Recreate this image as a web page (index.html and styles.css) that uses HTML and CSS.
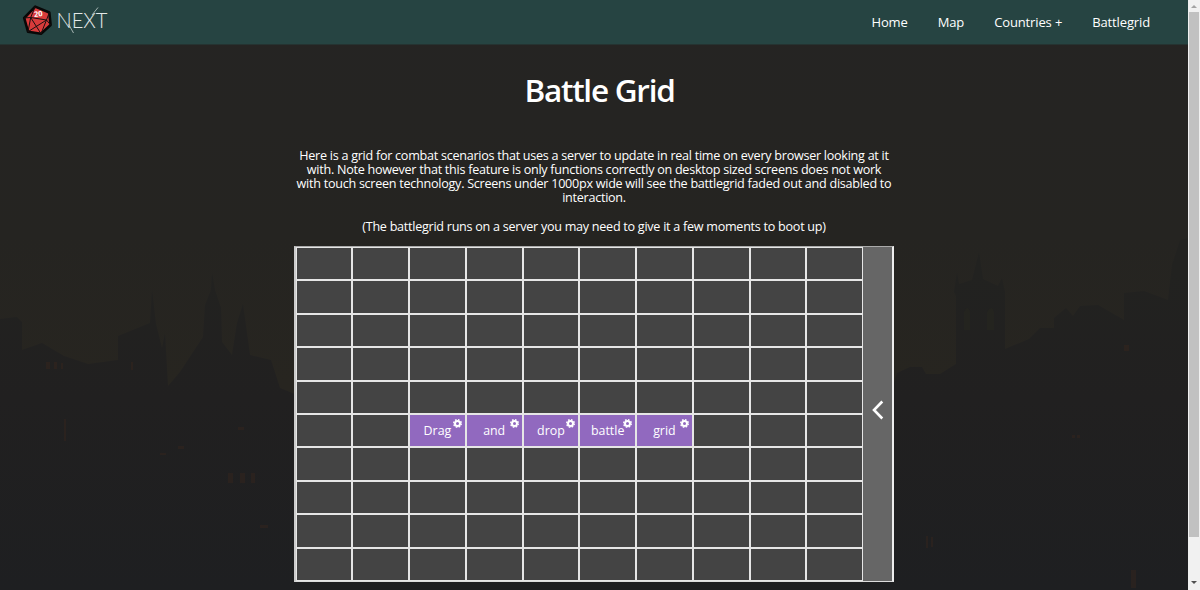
FILE: index.html
```html
<!DOCTYPE html>
<html lang="en">
<head>
<meta charset="utf-8">
<title>Battle Grid</title>
<link rel="stylesheet" href="styles.css">
</head>
<body>
<div class="window">
  <div class="page">
    <svg class="backdrop" viewBox="0 0 1188 590" aria-hidden="true">
      <defs>
        <linearGradient id="sky" x1="0" y1="0" x2="0" y2="1">
          <stop offset="0" stop-color="#252423"/><stop offset=".4" stop-color="#252421"/><stop offset=".65" stop-color="#272520"/>
        </linearGradient>
        <linearGradient id="town" x1="0" y1="270" x2="0" y2="590" gradientUnits="userSpaceOnUse">
          <stop offset="0" stop-color="#222220"/><stop offset=".4" stop-color="#212020"/><stop offset="1" stop-color="#1e1f21"/>
        </linearGradient>
      </defs>
      <rect width="1188" height="590" fill="url(#sky)"/>
      <path fill="url(#town)" d="M0 319L17 317L22 322V350L42 343L64 356L88 364L118 360V336L150 323L152 290L156 324L162 348L165 333L168 386L180 372L203 337L205 305L211 290L212 272L215 290L221 308L222 342L232 355L237 323L243 304L250 355L271 360L280 388L297 395H890L897 373L910 367H922L926 374H940L956 364V296L954 292L957 272L959 284L972 280L977 260L979 252L983 279L998 286L1002 278L1005 292V349L1029 339L1040 328H1054V318L1066 308L1073 316L1080 306L1098 305L1124 320V293L1144 291L1168 300L1172 265L1180 240L1188 238V590H0z"/>
      <g fill="#272620" opacity=".6"><path d="M964 312q4-8 6 0v18h-6zM987 312q5-8 7 0v18h-7z"/></g>
      <g fill="#40281d" opacity=".35"><path d="M46 362h4v7h-4zM54 362h3v7h-3zM61 363h2v6h-2zM131 362h2v8h-2zM178 446h6v3h-6zM160 453h6v2h-6zM238 427h6v3h-6zM228 473h5v10h-5zM240 473h5v10h-5zM251 473h4v10h-4zM64 419h2v22h-2zM260 525h8v3h-8zM1131 570h5v18h-5zM926 536h2v12h-2zM931 537h2v10h-2zM1124 345h5v6h-5zM1072 435h3v3h-3zM1077 435h3v3h-3z"/></g>
    </svg>
    <header class="navbar">
      <a class="brand">
        <svg class="logo" viewBox="0 0 90 36" role="img" aria-label="20 NEXT">
          <path d="M13.2 2.6L27.3 8.5L28.6 21L19 29.7L6 27.7L2.2 14z" fill="#d93b3b" stroke="#080808" stroke-width="2.6" stroke-linejoin="round"/>
          <path d="M13.2 2.6L8.7 13.5L2.2 14M8.7 13.5L24.5 16L27.3 8.5M24.5 16L28.6 21M8.7 13.5L6 27.7M8.7 13.5L19 29.7M24.5 16L6 27.7M24.5 16L19 29.7" fill="none" stroke="#181010" stroke-width="1"/>
          <text class="die-number" x="12" y="12.6" transform="rotate(-6 15 10)">20</text>
          <text class="wordmark" x="34.5" y="24" textLength="51" lengthAdjust="spacingAndGlyphs">NEXT</text>
          <path d="M46.5 20L51.5 29M70 11L76 3.5" stroke="#c5d0ce" stroke-width=".8"/>
        </svg>
      </a>
      <nav class="links"><a>Home</a><a>Map</a><a>Countries +</a><a>Battlegrid</a></nav>
    </header>
    <main class="content">
      <h1 class="title">Battle Grid</h1>
      <p class="intro">
        <span>Here is a grid for combat scenarios that uses a server to update in real time on every browser looking at it</span>
        <span>with. Note however that this feature is only functions correctly on desktop sized screens does not work</span>
        <span>with touch screen technology. Screens under 1000px wide will see the battlegrid faded out and disabled to</span>
        <span>interaction.</span>
        <span class="note">(The battlegrid runs on a server you may need to give it a few moments to boot up)</span>
      </p>
      <section class="board">
        <div class="cells" id="cells"></div>
        <button class="drawer" aria-label="Open drawer"><svg viewBox="0 0 12 20"><path d="M10.3 1.5L2 10L10.3 18.5" fill="none" stroke="#fff" stroke-width="2.6"/></svg></button>
      </section>
    </main>
  </div>
  <aside class="scrollbar"><i class="up"></i><i class="thumb"></i><i class="down"></i></aside>
</div>
<script src="board.js"></script>
</body>
</html>
```
FILE: styles.css
```css
* { box-sizing: border-box; }
body { margin: 0; overflow: hidden; background: #222; font-family: "Open Sans", sans-serif; color: #fff; }
.window { display: flex; width: 1200px; height: 590px; }
.page { position: relative; width: 1188px; height: 590px; overflow: hidden; }
.backdrop { position: absolute; inset: 0; width: 1188px; height: 590px; }
.navbar { position: relative; display: flex; justify-content: space-between; height: 44px; padding: 0 38px 0 22px; background: #264442; box-shadow: 0 1px 0 #253331; }
.logo { display: block; width: 90px; height: 36px; margin-top: 4px; }
.die-number { font: 700 7.5px "Open Sans", sans-serif; fill: #fff; }
.wordmark { font: 300 22px Lato, sans-serif; fill: #e3e9e8; }
.links { display: flex; gap: 30px; font-size: 13px; line-height: 44px; letter-spacing: -.13px; }
.content { position: relative; width: 600px; margin-left: 294px; display: flex; flex-direction: column; }
.title { margin: 25px 0 0 11px; font-size: 31.5px; line-height: 42px; font-weight: 600; text-align: center; letter-spacing: -1.25px; }
.intro { display: flex; flex-direction: column; align-items: center; margin: 37.5px 0 0; font-size: 12.6px; line-height: 14.25px; letter-spacing: -.27px; white-space: nowrap; }
.intro span { display: block; }
.intro .note { margin-top: 14.25px; }
.board { display: flex; height: 336px; margin-top: 12px; border: 1px solid #aaa; border-left: 2px solid #ccc; border-right: 2px solid #eee; border-bottom-color: #ddd; }
.cells { display: grid; grid-template-columns: repeat(10, 1fr); grid-template-rows: repeat(10, 1fr); gap: 2px; width: 567px; padding: 1px 1px 1px .6px; background: #e6e6e6; }
.cell { position: relative; background: #444; }
.token { display: flex; align-items: center; justify-content: center; background: #9169bf; font-size: 12.4px; line-height: 16px; }
.gear { position: absolute; top: 4px; right: 3px; width: 9px; height: 9px; }
.drawer { flex: 1; display: flex; align-items: center; justify-content: center; padding: 0; border: 0; background: #666; }
.drawer svg { width: 12px; height: 20px; margin: -8px 0 0; }
.scrollbar { display: flex; flex-direction: column; align-items: center; width: 12px; background: #f1f1f1; }
.up, .down { width: 0; height: 0; border: 3px solid transparent; }
.up { margin-top: 2px; border-bottom-color: #a3a3a3; }
.thumb { width: 10px; height: 525px; margin-top: 4px; background: #c1c1c1; }
.down { margin-top: 44px; border-top-color: #505050; }
```
FILE: board.js
```
const tokens = { 52: 'Drag', 53: 'and', 54: 'drop', 55: 'battle', 56: 'grid' };
const gear = '<svg class="gear" viewBox="0 0 9 9"><circle cx="4.5" cy="4.5" r="2.5" fill="none" stroke="#fff" stroke-width="2"/><circle cx="4.5" cy="4.5" r="3.8" fill="none" stroke="#fff" stroke-width="1.4" stroke-dasharray="1.6 1.385"/></svg>';
const cells = document.getElementById('cells');
for (let i = 0; i < 100; i++) {
  const cell = document.createElement('div');
  cell.className = 'cell';
  if (tokens[i]) {
    cell.classList.add('token');
    cell.innerHTML = '<span>' + tokens[i] + '</span>' + gear;
  }
  cells.append(cell);
}
```
